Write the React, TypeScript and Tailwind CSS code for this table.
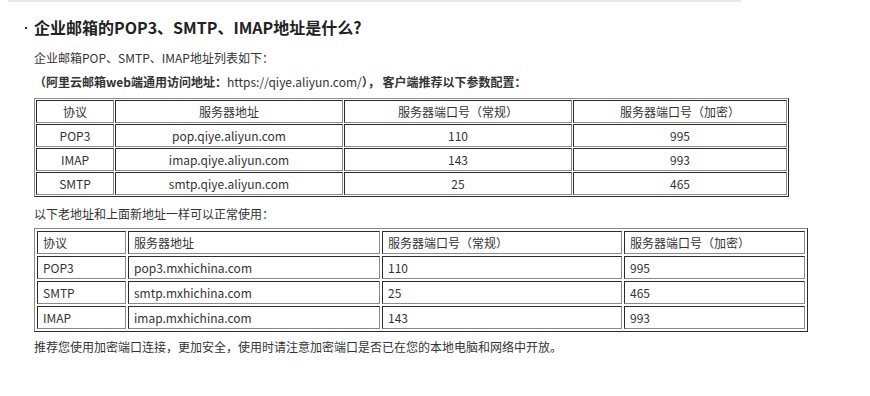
const font = { fontFamily: '"Noto Sans CJK SC", "Noto Sans", sans-serif' }

type Row = [string, string, string, string]

const head: Row = ['协议', '服务器地址', '服务器端口号（常规）', '服务器端口号（加密）']

const current: Row[] = [
  ['POP3', 'pop.qiye.aliyun.com', '110', '995'],
  ['IMAP', 'imap.qiye.aliyun.com', '143', '993'],
  ['SMTP', 'smtp.qiye.aliyun.com', '25', '465'],
]

const legacy: Row[] = [
  ['POP3', 'pop3.mxhichina.com', '110', '995'],
  ['SMTP', 'smtp.mxhichina.com', '25', '465'],
  ['IMAP', 'imap.mxhichina.com', '143', '993'],
]

// classic border="1" look: outset frame, inset cells
const cell =
  'h-[23px] p-0 border border-t-[#2b2b2b] border-l-[#2b2b2b] border-r-[#8a8a8a] border-b-[#8a8a8a] font-normal text-[12px] leading-[21px] text-[#333]'

function PortTable() {
  const widths = ['w-[78px]', 'w-[228px]', 'w-[228px]', 'w-[214px]']
  return (
    <table className="w-[755px] table-fixed border-separate border-spacing-px border border-t-[#8a8a8a] border-l-[#8a8a8a] border-r-[#2b2b2b] border-b-[#2b2b2b]">
      <thead>
        <tr>
          {head.map((h, i) => (
            <th key={h} className={`${cell} ${widths[i]} text-center`}>
              {h}
            </th>
          ))}
        </tr>
      </thead>
      <tbody>
        {current.map((r) => (
          <tr key={r[0]}>
            {r.map((v, i) => (
              <td key={i} className={`${cell} text-center`}>
                {v}
              </td>
            ))}
          </tr>
        ))}
      </tbody>
    </table>
  )
}

function LegacyTable() {
  const widths = ['w-[89px]', 'w-[252px]', 'w-[240px]', 'w-[181px]']
  return (
    <table className="w-[774px] table-fixed border-separate border-spacing-[2px] border border-t-[#8a8a8a] border-l-[#8a8a8a] border-r-[#2b2b2b] border-b-[#2b2b2b]">
      <tbody>
        <tr>
          {head.map((h, i) => (
            <td key={h} className={`${cell} ${widths[i]} pl-[5px] text-left`}>
              {h}
            </td>
          ))}
        </tr>
        {legacy.map((r) => (
          <tr key={r[0]}>
            {r.map((v, i) => (
              <td key={i} className={`${cell} pl-[5px] text-left`}>
                {v}
              </td>
            ))}
          </tr>
        ))}
      </tbody>
    </table>
  )
}

export default function App() {
  return (
    <div className="w-[870px] h-[396px] bg-white overflow-hidden" style={font}>
      <div className="ml-[8px] w-[733px] h-[2px] bg-[#e8e8e8]" />
      <div className="pl-[34px] flex flex-col items-start text-[#333]">
        <h2 className="relative mt-[13px] text-[16px] leading-[24px] font-bold text-[#222]">
          <span className="absolute left-[-9px] top-[12px] w-[2px] h-[2px] bg-[#333]" />
          企业邮箱的POP3、SMTP、IMAP地址是什么?
        </h2>
        <p className="mt-[9px] text-[12px] leading-[20px]">企业邮箱POP、SMTP、IMAP地址列表如下：</p>
        <p className="mt-[4px] text-[12px] leading-[20px] font-bold">
          （阿里云邮箱web端通用访问地址：<span className="font-normal">https://qiye.aliyun.com/</span>）， 客户端推荐以下参数配置：
        </p>
        <div className="mt-[6px]">
          <PortTable />
        </div>
        <p className="mt-[7px] text-[12px] leading-[20px]">以下老地址和上面新地址一样可以正常使用：</p>
        <div className="mt-[4px]">
          <LegacyTable />
        </div>
        <p className="mt-[5px] text-[12px] leading-[20px]">
          推荐您使用加密端口连接，更加安全，使用时请注意加密端口是否已在您的本地电脑和网络中开放。
        </p>
      </div>
    </div>
  )
}
